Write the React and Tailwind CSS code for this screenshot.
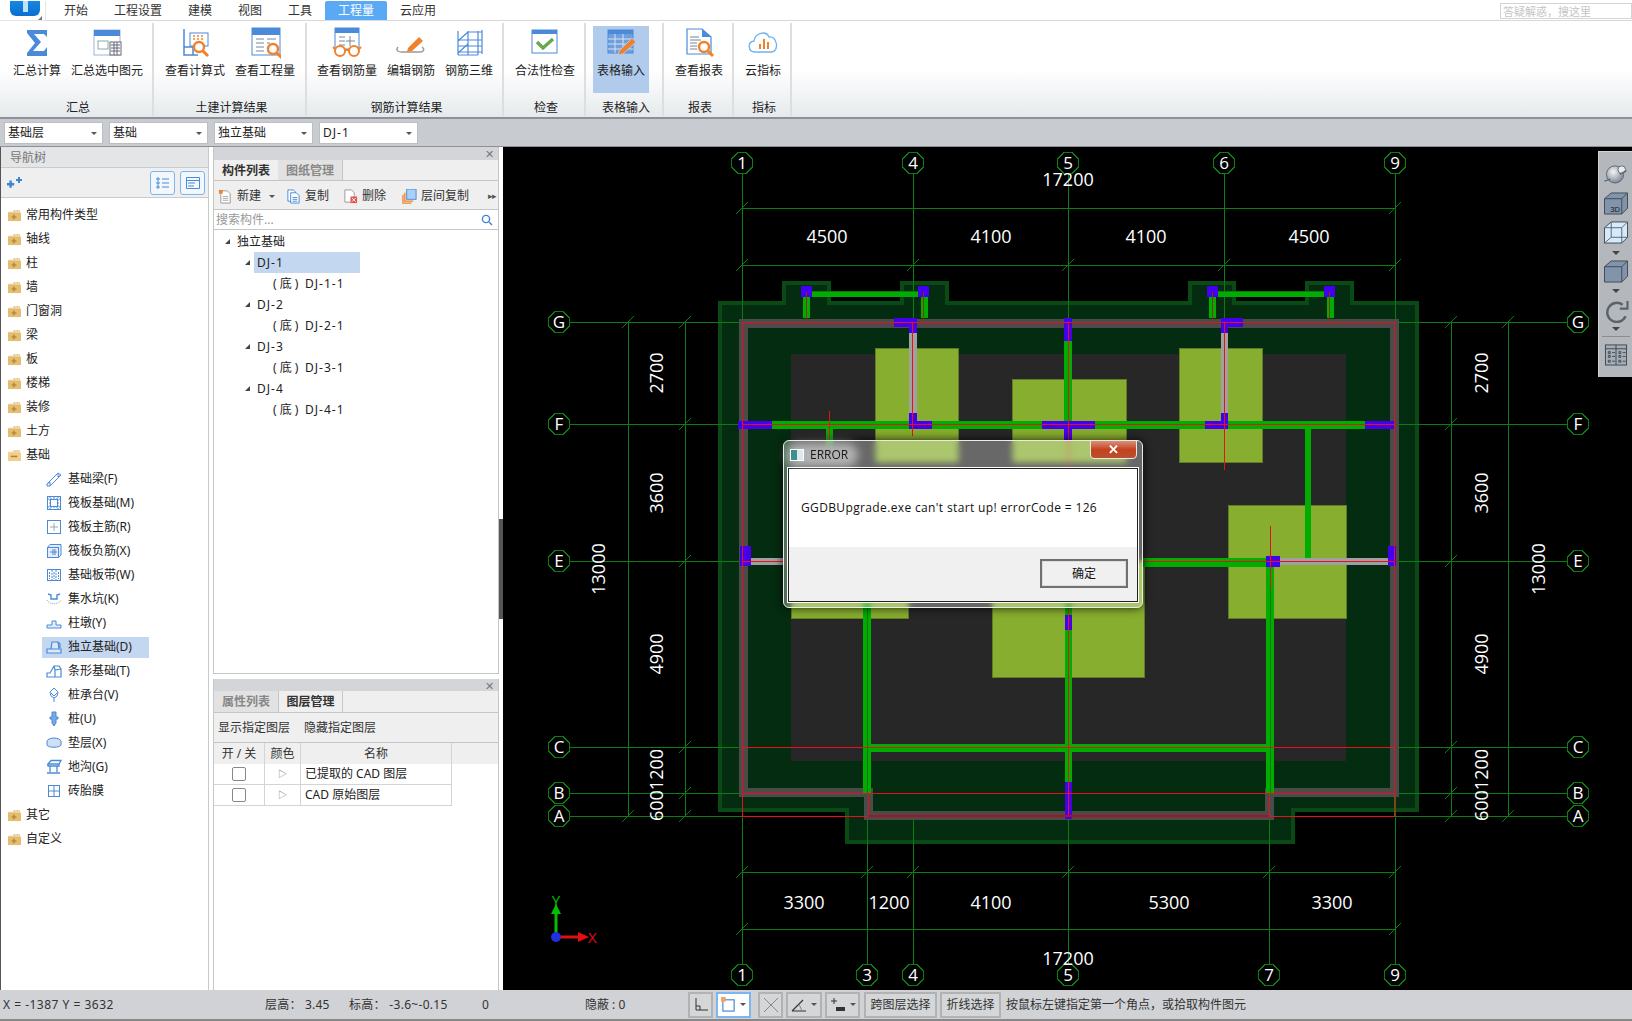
import React from "react";

const BLUE = "#4a8ad8";
const ORANGE = "#f0822d";

// ribbon icons, all on a 32x32 box
const Glass = ({ x = 20, y = 20, r = 5 }) => (
  <g fill="none" stroke={ORANGE}>
    <circle cx={x} cy={y} r={r} strokeWidth="2.4" fill="#fff" />
    <path d={`M${x + r - 1} ${y + r - 1}l5 5`} strokeWidth="3" />
  </g>
);

const ribbonIcons = {
  sum: <path d="M6 3H26V10L23 7H13L20 15L12 24H23L26 20V29H6V26L14 16L6 6Z" fill={BLUE} />,
  sumSel: (
    <g>
      <rect x="3" y="3" width="26" height="25" fill="#fff" stroke="#9db6d6" />
      <rect x="3" y="3" width="26" height="6" fill={BLUE} />
      <rect x="7" y="14" width="10" height="8" fill="none" stroke="#8aa" />
      <rect x="19" y="15" width="11" height="13" fill="#fff" stroke="#667" />
      <path d="M20 18h9M20 21h9M20 24h9M23 15v13M26 15v13" stroke="#667" strokeWidth="1" />
    </g>
  ),
  calc: (
    <g>
      <path d="M5 2V28H19M5 20H14V28" fill="none" stroke={BLUE} strokeWidth="1.5" />
      <rect x="11" y="6" width="18" height="13" fill="#fff" stroke={BLUE} />
      <path d="M14 9h2M18 9h2M22 9h2M14 12h2M18 12h2M22 12h2" stroke={ORANGE} strokeWidth="1.6" />
      <Glass x={20} y={20} r={5} />
    </g>
  ),
  qty: (
    <g>
      <rect x="3" y="1" width="28" height="27" fill="#fff" stroke={BLUE} />
      <rect x="3" y="1" width="28" height="7" fill={BLUE} />
      <path d="M7 12h8M7 16h8M7 20h8M7 24h8M18 12h9M18 16h3M18 24h2" stroke="#789" />
      <Glass x={24} y={22} r={5} />
    </g>
  ),
  rebarGlasses: (
    <g>
      <rect x="4" y="1" width="24" height="21" fill="#fff" stroke={BLUE} />
      <rect x="4" y="1" width="24" height="5" fill={BLUE} />
      <path d="M8 10h6M8 14h6M8 18h6M19 9v10M15 14h9" stroke="#789" />
      <g fill="#fff" stroke={ORANGE} strokeWidth="2">
        <circle cx="9" cy="24" r="5" />
        <circle cx="23" cy="24" r="5" />
      </g>
      <path d="M14 23h4M4 22L2 20M28 22L30 20" stroke={ORANGE} strokeWidth="2" />
    </g>
  ),
  rebarEdit: (
    <g>
      <path d="M3 20c-3 4 1 5 4 5H25c4 0 5-3 2-5" fill="none" stroke="#999" strokeWidth="1.4" />
      <path d="M13 21L24 10L28 14L17 24L12 25Z" fill={ORANGE} />
    </g>
  ),
  rebar3d: (
    <g fill="none" stroke={BLUE} strokeWidth="1.2">
      <path d="M5 4V28M15 4V28M25 4V28M29 3V27M5 14L15 5M5 26L15 17" />
      <path d="M5 13H29M5 19H29M5 25H29M15 5H29M5 28H25" />
    </g>
  ),
  check: (
    <g>
      <rect x="3" y="3" width="25" height="23" fill="#fff" stroke={BLUE} />
      <rect x="3" y="3" width="25" height="4" fill={BLUE} />
      <path d="M8 15L14 21L24 12" fill="none" stroke="#6aa84f" strokeWidth="3.4" />
    </g>
  ),
  table: (
    <g>
      <rect x="3" y="3" width="25" height="23" fill="#6f9fdc" stroke={BLUE} />
      <rect x="3" y="3" width="25" height="4" fill={BLUE} />
      <path d="M3 12H28M3 17H28M3 22H28M10 7V26M18 7V26" stroke="#d5e2f4" />
      <path d="M14 24L27 11L31 15L18 27L13 28Z" fill={ORANGE} stroke="#b0cbec" />
    </g>
  ),
  report: (
    <g>
      <path d="M4 2H19L28 10V27H4Z" fill="#fff" stroke={BLUE} strokeWidth="1.2" />
      <path d="M19 2L28 10H19Z" fill={BLUE} />
      <path d="M7 10h9M7 13h11M7 16h7M7 19h7M7 22h7" stroke="#789" />
      <Glass x={21} y={20} r={5} />
    </g>
  ),
  cloud: (
    <g>
      <path d="M8 25C1 25 0 15 7 14C8 6 19 3 22 10C30 8 33 25 24 25Z" fill="#fff" stroke="#6db3f0" strokeWidth="1.3" />
      <path d="M13 17v5M17 12v10M21 15v7" stroke={ORANGE} strokeWidth="2" />
    </g>
  ),
};

const ribbonGroups = [
  { label: "汇总", w: 154, pl: 7, items: [["汇总计算", "sum", 60], ["汇总选中图元", "sumSel", 80]] },
  { label: "土建计算结果", w: 153, pl: 6, items: [["查看计算式", "calc", 70], ["查看工程量", "qty", 70]] },
  { label: "钢筋计算结果", w: 197, pl: 5, items: [["查看钢筋量", "rebarGlasses", 70], ["编辑钢筋", "rebarEdit", 58], ["钢筋三维", "rebar3d", 58]] },
  { label: "检查", w: 82, pl: 6, items: [["合法性检查", "check", 70]] },
  { label: "表格输入", w: 78, pl: 7, items: [["表格输入", "table", 56, true]] },
  { label: "报表", w: 70, pl: 5, items: [["查看报表", "report", 60]] },
  { label: "指标", w: 58, pl: 4, items: [["云指标", "cloud", 50]] },
];

function TabBar() {
  const tabs = ["开始", "工程设置", "建模", "视图", "工具", "工程量", "云应用"];
  return (
    <div className="h-[21px] flex items-end border-b border-[#d8d8d8] bg-white relative shrink-0">
      <div className="w-[46px] h-[20px] relative border-r border-b border-[#e4e4e4] mb-[-1px] overflow-hidden">
        <div className="absolute left-[10px] top-[-12px] w-[30px] h-[27px] rounded-md bg-gradient-to-b from-[#1f9af0] to-[#0a6fd0]" />
        <div className="absolute left-[23px] top-0 w-[5px] h-[11px] bg-[#bfe2fa]" />
        <div className="absolute left-[38px] top-[15px] w-0 h-0 border-l-[4px] border-l-transparent border-b-[4px] border-b-[#777]" />
      </div>
      <div className="flex pl-[18px] h-[19px]">
        {tabs.map((t, i) => (
          <div
            key={t}
            className={
              i === 5
                ? "px-[13px] h-[19px] rounded-t-[2px] bg-[#5aa9f5] text-white text-[12px] leading-[20px]"
                : i === 4
                ? "pr-[13px] text-[#333] text-[12px] leading-[20px]"
                : i === 6
                ? "pl-[13px] text-[#333] text-[12px] leading-[20px]"
                : "pr-[26px] text-[#333] text-[12px] leading-[20px]"
            }
          >
            {t}
          </div>
        ))}
      </div>
      <div className="absolute right-0 top-[3px] w-[132px] h-[16px] border border-[#d4d4d4] text-[11px] leading-[15px] text-[#c4c4c4] pl-[2px]">
        答疑解惑，搜这里
      </div>
    </div>
  );
}

function Ribbon() {
  return (
    <div className="h-[98px] flex bg-gradient-to-b from-white from-50% to-[#e6eaec] border-b-2 border-[#8d9094] shrink-0">
      {ribbonGroups.map((g) => (
        <div key={g.label} style={{ width: g.w }} className="flex flex-col h-[93px] mt-[2px] border-r-2 border-[#dcdfe0] shrink-0">
          <div className="flex h-[70px] pt-[3px]" style={{ paddingLeft: g.pl }}>
            {g.items.map(([t, ic, w, active]) => (
              <div key={t} style={{ width: w }} className={"flex flex-col items-center h-[67px] shrink-0 " + (active ? "bg-[#b0cbec]" : "")}>
                <svg viewBox="0 0 32 32" className="w-[32px] h-[32px] mt-[1px]">{ribbonIcons[ic]}</svg>
                <div className="text-[12px] leading-[16px] text-[#222] mt-[4px] whitespace-nowrap">{t}</div>
              </div>
            ))}
          </div>
          <div className="text-center text-[12px] leading-[16px] text-[#222] mt-[7px] pl-[4px]">{g.label}</div>
        </div>
      ))}
    </div>
  );
}

function ComboStrip() {
  return (
    <div className="h-[28px] flex items-center gap-[6px] pl-[4px] pt-[1px] bg-[#c8cbd0] border-b border-[#8d9094] shrink-0">
      {["基础层", "基础", "独立基础", "DJ-1"].map((t) => (
        <div key={t} className="w-[99px] h-[22px] bg-white border border-[#bcbec2] flex items-center justify-between pl-[3px] pr-[5px] text-[12px] text-[#222]">
          <span className={t === "DJ-1" ? "tracking-[1px]" : ""}>{t}</span>
          <span className="w-0 h-0 border-x-[3px] border-x-transparent border-t-[3px] border-t-[#555]" />
        </div>
      ))}
    </div>
  );
}

// little tree icons, 16x16
const S = ({ children }) => (
  <svg viewBox="0 0 16 16" className="w-[16px] h-[16px] shrink-0" fill="none" stroke={BLUE} strokeWidth="1">
    {children}
  </svg>
);

const navIcons = {
  beam: <path d="M1 13L12 2L15 4L4 15H1ZM4 15V11L1 13M12 2V6L15 4" />,
  raft: <g><rect x="1.5" y="1.5" width="13" height="13" /><rect x="4.5" y="4.5" width="7" height="7" /><path d="M4 1v13M8 1v3M12 1v13M1 4h13M1 12h13" strokeDasharray="2 1" /></g>,
  raftMain: <g><rect x="1.5" y="1.5" width="13" height="13" /><path d="M8 4v8M4 8h8" stroke="#9ab" /></g>,
  raftNeg: <g><path d="M1.5 4.5L4 1.5H15V12L12.5 14.5H1.5Z" fill="#e3edf9" /><rect x="1.5" y="4.5" width="11" height="10" /><path d="M4 9h7M7 6v6M9 6v6" /></g>,
  strip: <g><rect x="1.5" y="2.5" width="13" height="11" /><path d="M1 2.5h14M6 3v10M10 3v10M3.5 5v7M8 5v7M12.5 5v7" strokeDasharray="2 1" /></g>,
  pit: <g><path d="M2 3L5 4V8H11V4L14 3" strokeWidth="1.4" /><path d="M1 9C3 14 13 14 15 9" strokeDasharray="1 1" stroke="#8aa" /></g>,
  pier: <g><path d="M1 13H15V10H10V6H6V10H1Z" fill="#e3edf9" /></g>,
  found: <g><path d="M1 14V10H5L6 3H12L13 10H15V14ZM1 10H13M12 3L14 5V9" fill="#dbe7f7" strokeWidth="1.2" /></g>,
  stripFound: <g><path d="M1 14V10H4L8 3H13L15 6V14ZM8 3L9 7L15 6M9 7V14" strokeWidth="1.2" /></g>,
  cap: <g><path d="M8 1L12 5L11 9L8 11L5 9L4 5ZM8 11V15M5 6L8 9L11 6" /></g>,
  pile: <g><path d="M6 1H10V6H12V8H10V12L8 15L6 12V8H4V6H6Z" fill="#7aa8e4" /></g>,
  cushion: <g><ellipse cx="8" cy="6.5" rx="7" ry="3.5" fill="#cfe0f5" /><path d="M1 7V10C2 13 14 13 15 10V7" fill="#cfe0f5" /></g>,
  ditch: <g><path d="M2 5L5 1.5H15L13 5ZM2 5H13V7H2ZM4 7V13M11 7V13M1 14H14" strokeWidth="1.3" /></g>,
  brick: <g><rect x="2.5" y="2.5" width="11" height="11" /><path d="M8 2v12M2 8h12" /></g>,
};

const navTop = ["常用构件类型", "轴线", "柱", "墙", "门窗洞", "梁", "板", "楼梯", "装修", "土方"];
const navChildren = [
  ["基础梁(F)", "beam"], ["筏板基础(M)", "raft"], ["筏板主筋(R)", "raftMain"], ["筏板负筋(X)", "raftNeg"],
  ["基础板带(W)", "strip"], ["集水坑(K)", "pit"], ["柱墩(Y)", "pier"], ["独立基础(D)", "found"],
  ["条形基础(T)", "stripFound"], ["桩承台(V)", "cap"], ["桩(U)", "pile"], ["垫层(X)", "cushion"],
  ["地沟(G)", "ditch"], ["砖胎膜", "brick"],
];

const Folder = ({ open }) => (
  <svg viewBox="0 0 16 14" className="w-[15px] h-[13px] shrink-0">
    <path d="M1 3H6L7 1H14V12H1Z" fill="#eed6a4" />
    <path d="M1 4H15V13H1Z" fill={open ? "#f0cf8c" : "#e6bd70"} />
    {open ? <path d="M4 8h7" stroke="#a8803a" strokeWidth="1.6" /> : <path d="M5 8.5h5M7.5 6v5" stroke="#b48a3c" strokeWidth="1.6" />}
  </svg>
);

function NavRow({ label, open }) {
  return (
    <div className="h-[24px] flex items-center pl-[6px] gap-[4px] text-[12px] text-[#222]">
      <Folder open={open} />
      <span>{label}</span>
    </div>
  );
}

function NavTree() {
  return (
    <div className="w-[209px] h-full flex flex-col border-l border-[#555] border-r-[#c8cacc] border-r shrink-0 bg-white">
      <div className="h-[21px] bg-[#e4e5e7] border-b border-[#c8cacc] text-[12px] leading-[22px] text-[#777] pl-[9px]">导航树</div>
      <div className="h-[30px] bg-[#efefef] border-b border-[#c8cacc] flex items-center pr-[3px]">
        <svg viewBox="0 0 16 16" className="w-[16px] h-[16px] ml-[6px] mr-auto" fill="#3f83d4">
          <path d="M0 9h3V6h3v3h3v3H6v3H3v-3H0z" transform="scale(.8) translate(0 1)" />
          <path d="M9 4h2V2h2v2h2v2h-2v2h-2V6H9z" />
        </svg>
        {[0, 1].map((i) => (
          <div key={i} className="w-[25px] h-[24px] ml-[5px] rounded-[3px] border border-[#7db6ee] bg-[#f2f7fc] flex items-center justify-center">
            <svg viewBox="0 0 16 16" className="w-[16px] h-[16px]" fill="none" stroke={BLUE}>
              {i === 0 ? <path d="M2 3h2v2H2zM7 4h7M2 7h2v2H2zM7 8h7M2 11h2v2H2zM7 12h7" /> : <path d="M1.5 2.5h13v11h-13zM1.5 5.5h13M3 8h7M3 11h6" />}
            </svg>
          </div>
        ))}
      </div>
      <div className="pt-[5px]">
        {navTop.map((t) => <NavRow key={t} label={t} />)}
        <NavRow label="基础" open />
        {navChildren.map(([t, ic]) => (
          <div key={t} className="h-[24px] flex items-center">
            <div className={"ml-[41px] pl-[4px] w-[107px] h-[21px] flex items-center gap-[6px] text-[12px] text-[#222] whitespace-nowrap " + (ic === "found" ? "bg-[#c4d7f0]" : "")}>
              <S>{navIcons[ic]}</S>
              <span>{t}</span>
            </div>
          </div>
        ))}
        <NavRow label="其它" />
        <NavRow label="自定义" />
      </div>
    </div>
  );
}

const tools = [
  ["新建", <g key="a"><path d="M3 2H10L13 5V15H3Z" fill="#fff" stroke="#999" /><path d="M5 8h6M5 10h6M5 12h6" stroke="#aaa" /><rect x="1" y="1" width="4" height="4" fill={ORANGE} /></g>],
  ["复制", <g key="b"><path d="M2 1H8L10 3V13H2Z" fill="#fff" stroke={BLUE} /><path d="M5 4H11L14 7V15H5Z" fill="#fff" stroke={BLUE} /><path d="M7 9h5M7 11h5M7 13h5" stroke={BLUE} /></g>],
  ["删除", <g key="c"><path d="M2 1H9L12 4V14H2Z" fill="#fff" stroke="#999" /><rect x="8" y="8" width="7" height="7" fill="#e0524f" /><path d="M9.5 9.5l4 4m0-4l-4 4" stroke="#fff" /></g>],
  ["层间复制", <g key="d"><rect x="5" y="0" width="10" height="11" fill="#a9d0f7" stroke={BLUE} /><path d="M3 4V13H12M1 6V15H10" fill="none" stroke={ORANGE} strokeWidth="1.4" /></g>],
];

function ComponentPanel() {
  const rows = [["DJ-1", "DJ-1-1"], ["DJ-2", "DJ-2-1"], ["DJ-3", "DJ-3-1"], ["DJ-4", "DJ-4-1"]];
  return (
    <div className="h-[527px] border-x border-b border-[#c4c6c8] bg-white flex flex-col">
      <div className="h-[13px] bg-[#d3d5d8] flex justify-end items-center pr-[4px] text-[#777] text-[11px] leading-none">✕</div>
      <div className="h-[21px] flex bg-[#efefef] border-b border-[#c4c6c8] text-[12px] font-bold leading-[21px]">
        <div className="w-[64px] text-center text-[#333]">构件列表</div>
        <div className="w-[65px] text-center text-[#888] bg-[#e2e2e2] border-r border-[#c4c6c8]">图纸管理</div>
      </div>
      <div className="h-[29px] flex items-center bg-[#efefef] border-b border-[#c4c6c8] text-[12px] text-[#333] pl-[4px] pt-[2px]">
        {tools.map(([t, g], i) => (
          <div key={t} className={"flex items-center gap-[4px] " + ["mr-[5px]", "mr-[14px]", "mr-[16px]", ""][i]}>
            <svg viewBox="0 0 16 16" className="w-[15px] h-[15px]">{g}</svg>
            <span>{t}</span>
            {i === 0 && <span className="ml-[4px] mr-[6px] w-0 h-0 border-x-[3px] border-x-transparent border-t-[3px] border-t-[#555]" />}
          </div>
        ))}
        <span className="text-[9px] text-[#555] tracking-[-1px] ml-auto mr-[2px]">▸▸</span>
      </div>
      <div className="h-[20px] flex items-center justify-between border-b border-[#c4c6c8] text-[12px] text-[#999] pl-[2px] pr-[5px] pt-[1px]">
        <span>搜索构件...</span>
        <svg viewBox="0 0 12 12" className="w-[12px] h-[12px]" fill="none" stroke="#3f83d4" strokeWidth="1.4">
          <circle cx="5" cy="5" r="3.6" />
          <path d="M8 8l3 3" />
        </svg>
      </div>
      <div className="pt-[1px] text-[12px] text-[#222]">
        <div className="h-[21px] flex items-center pl-[11px] gap-[7px]">
          <span className="w-0 h-0 border-l-[5px] border-l-transparent border-b-[5px] border-b-[#444]" />
          <span>独立基础</span>
        </div>
        {rows.map(([a, b], i) => (
          <React.Fragment key={a}>
            <div className="h-[21px] flex items-center pl-[31px] relative">
              <span className="w-0 h-0 border-l-[5px] border-l-transparent border-b-[5px] border-b-[#444] mr-[4px]" />
              <span className={"h-[21px] leading-[21px] pl-[3px] w-[106px] tracking-[1px] " + (i === 0 ? "bg-[#c4d7f0]" : "")}>{a}</span>
            </div>
            <div className="h-[21px] flex items-center pl-[59px]">
              <span className="w-[32px] whitespace-nowrap">( 底 )</span>
              <span className="tracking-[1px]">{b}</span>
            </div>
          </React.Fragment>
        ))}
      </div>
    </div>
  );
}

function LayerPanel() {
  return (
    <div className="flex-1 mt-[5px] border-x border-[#c4c6c8] bg-white flex flex-col">
      <div className="h-[12px] bg-[#d3d5d8] flex justify-end items-center pr-[4px] text-[#777] text-[11px] leading-none">✕</div>
      <div className="h-[22px] flex bg-[#efefef] border-b border-[#c4c6c8] text-[12px] font-bold leading-[21px]">
        <div className="w-[64px] text-center text-[#888] bg-[#e2e2e2]">属性列表</div>
        <div className="w-[65px] text-center text-[#333] border-x border-[#c4c6c8]">图层管理</div>
      </div>
      <div className="h-[30px] flex items-center gap-[14px] pl-[4px] bg-[#efefef] border-b border-[#c4c6c8] text-[12px] text-[#333]">
        <span>显示指定图层</span>
        <span>隐藏指定图层</span>
      </div>
      <div className="bg-[#efefef] h-[21px]">
        <div className="grid grid-cols-[51px_36px_151px] w-[238px] h-[21px] text-[12px] text-[#333] text-center leading-[21px]">
          <div className="border-r border-[#d4d4d4]">开 / 关</div>
          <div className="border-r border-[#d4d4d4]">颜色</div>
          <div className="border-r border-[#d4d4d4]">名称</div>
        </div>
      </div>
      {["已提取的 CAD 图层", "CAD 原始图层"].map((t) => (
        <div key={t} className="grid grid-cols-[51px_36px_151px] w-[238px] h-[21px] text-[12px] text-[#222] border-y border-t-0 border-[#d4d4d4]">
          <div className="border-r border-[#d4d4d4] flex items-center justify-center">
            <span className="w-[14px] h-[14px] rounded-[2px] border border-[#888]" />
          </div>
          <div className="border-r border-[#d4d4d4] flex items-center justify-center">
            <span className="text-[9px] text-[#777]">▷</span>
          </div>
          <div className="border-r border-[#d4d4d4] pl-[4px] leading-[20px]">{t}</div>
        </div>
      ))}
    </div>
  );
}

// --- the CAD drawing, in page coordinates ---
const AXIS = "#0b7d12";
const WALL = "#00ad00";
const COL = "#4400ee";
const RED = "#e5121c";
const GREY = "#a0a0a0";

const R = ({ x1, y1, x2, y2, f }) => <rect x={x1} y={y1} width={x2 - x1} height={y2 - y1} fill={f} />;

const Bubble = ({ x, y, t }) => {
  const r = 11;
  const pts = Array.from({ length: 8 }, (_, i) => {
    const a = (Math.PI / 4) * i + Math.PI / 8;
    return `${x + r * Math.cos(a)},${y + r * Math.sin(a)}`;
  }).join(" ");
  return (
    <g>
      <polygon points={pts} fill="#000" stroke={AXIS} strokeWidth="1.3" />
      <text x={x} y={y + 6} textAnchor="middle" fontSize="17" fill="#fff" fontFamily="Open Sans, sans-serif">{t}</text>
    </g>
  );
};

const Dim = ({ x, y, t, rot }) => (
  <text
    x={x}
    y={y}
    textAnchor="middle"
    dominantBaseline="central"
    fontSize="18"
    fill="#fff"
    fontFamily="Open Sans, sans-serif"
    transform={rot ? `rotate(-90 ${x} ${y})` : undefined}
  >
    {t}
  </text>
);

const outerPts = "720,303 784,303 784,283 829,283 829,303 902,303 902,283 947,283 947,303 1190,303 1190,283 1234,283 1234,303 1307,303 1307,283 1352,283 1352,303 1417,303 1417,810 1293,810 1293,842 847,842 847,810 720,810";
const innerPts = "743,323 1394,323 1394,792 1269,792 1269,815 868,815 868,792 743,792";

function Ticks({ xs, y }) {
  return xs.map((x) => <path key={x + "-" + y} d={`M${x - 6} ${y + 6}L${x + 6} ${y - 6}`} stroke={AXIS} />);
}
function TicksV({ ys, x }) {
  return ys.map((y) => <path key={x + "-" + y} d={`M${x - 6} ${y + 6}L${x + 6} ${y - 6}`} stroke={AXIS} />);
}

function Drawing() {
  const hys = [322, 424, 561, 747, 793, 816];
  return (
    <svg viewBox="503 147 1129 843" className="w-full h-full block" shapeRendering="crispEdges">
      <rect x="503" y="147" width="1129" height="843" fill="#000" />
      <polygon points={outerPts} fill="#042c10" stroke="#0a4a14" strokeWidth="4" />

      {/* axes sit under the floor fill */}
      <g stroke={AXIS} strokeWidth="1">
        {[742, 913, 1068, 1395].map((x) => <line key={x} x1={x} y1={174} x2={x} y2={964} />)}
        <line x1={1224} y1={174} x2={1224} y2={816} />
        <line x1={867} y1={793} x2={867} y2={964} />
        <line x1={1269} y1={793} x2={1269} y2={964} />
        {hys.map((y) => <line key={y} x1={570} y1={y} x2={1567} y2={y} />)}
        <line x1={742} y1={208} x2={1395} y2={208} />
        <line x1={742} y1={265} x2={1395} y2={265} />
        <line x1={742} y1={872} x2={1395} y2={872} />
        <line x1={742} y1={929} x2={1395} y2={929} />
        {[628, 685, 1451, 1508].map((x) => <line key={x} x1={x} y1={322} x2={x} y2={816} />)}
      </g>
      <Ticks xs={[742, 1395]} y={208} />
      <Ticks xs={[742, 913, 1068, 1224, 1395]} y={265} />
      <Ticks xs={[742, 867, 913, 1068, 1269, 1395]} y={872} />
      <Ticks xs={[742, 1395]} y={929} />
      {[628, 1508].map((x) => <TicksV key={x} ys={[322, 816]} x={x} />)}
      {[685, 1451].map((x) => <TicksV key={x} ys={hys} x={x} />)}

      <polygon points={innerPts} fill="#042c10" />
      <R x1={791} y1={354} x2={1346} y2={761} f="#272727" />
      {[
        [875, 348, 958, 462], [1012, 379, 1126, 462], [1179, 348, 1262, 462],
        [1228, 505, 1346, 618], [791, 520, 908, 618], [992, 560, 1144, 677],
      ].map(([a, b, c, d]) => (
        <rect key={a} x={a} y={b} width={c - a} height={d - b} fill="#87ae2e" stroke="#5f7d26" />
      ))}
      <polygon points={innerPts} fill="none" stroke="#4b4b4b" strokeWidth="9" />

      {/* walls */}
      {[0, 406].map((d) => (
        <g key={d}>
          <R x1={812 + d} y1={291} x2={918 + d} y2={297} f={WALL} />
          <path d={`M${812 + d} 291H${918 + d}`} stroke="#0a7a10" />
          <R x1={803 + d} y1={297} x2={810 + d} y2={318} f={WALL} />
          <R x1={921 + d} y1={297} x2={928 + d} y2={318} f={WALL} />
          <R x1={801 + d} y1={286} x2={812 + d} y2={297} f={COL} />
          <R x1={918 + d} y1={286} x2={929 + d} y2={297} f={COL} />
          <path d={`M${806 + d} 322V292M${923 + d} 322V292`} fill="none" stroke="#8a3010" />
        </g>
      ))}
      <R x1={742} y1={421} x2={1395} y2={429} f={WALL} />
      <R x1={909} y1={333} x2={917} y2={413} f={GREY} />
      <R x1={1221} y1={333} x2={1228} y2={413} f={GREY} />
      <R x1={1064} y1={341} x2={1072} y2={421} f={WALL} />
      <R x1={826} y1={429} x2={833} y2={445} f={WALL} />
      <R x1={1305} y1={429} x2={1311} y2={558} f={WALL} />
      <R x1={751} y1={558} x2={783} y2={565} f={GREY} />
      <R x1={1143} y1={558} x2={1266} y2={567} f={WALL} />
      <R x1={1280} y1={558} x2={1388} y2={565} f={GREY} />
      <R x1={863} y1={600} x2={871} y2={793} f={WALL} />
      <R x1={1065} y1={600} x2={1072} y2={793} f={WALL} />
      <R x1={1266} y1={567} x2={1274} y2={793} f={WALL} />
      <R x1={863} y1={744} x2={1274} y2={752} f={WALL} />
      <path d="M867 600V793M1270 567V793" stroke="#0a7a10" />

      {/* columns */}
      {[
        [894, 318, 917, 327], [909, 327, 917, 333], [1064, 318, 1072, 341], [1221, 318, 1243, 327], [1221, 327, 1228, 333],
        [738, 421, 772, 429], [909, 413, 917, 429], [909, 421, 932, 429], [1042, 421, 1095, 429], [1064, 429, 1072, 440],
        [1205, 421, 1228, 429], [1221, 413, 1228, 429], [1365, 421, 1395, 429],
        [740, 546, 751, 566], [1388, 546, 1396, 566], [1266, 556, 1280, 567], [1065, 615, 1072, 630], [1065, 782, 1072, 819],
      ].map(([a, b, c, d]) => <R key={a + "-" + b} x1={a} y1={b} x2={c} y2={d} f={COL} />)}

      {/* red centre lines */}
      <g stroke={RED} fill="none" strokeWidth="1">
        <path d="M742 322H1394V816H742ZM742 424H1395M742 561H1395M742 747H1394M742 793H1394M868 793V816M1269 793V816" />
        <path d="M1068 322V816" />
        <path d="M912 322V436M1224 322V470M829 411V445M1270 526V589" />
      </g>
      <path d="M868 816H1269" stroke="#a8141c" strokeWidth="2" />

      {/* bubbles */}
      {[[742, "1"], [913, "4"], [1068, "5"], [1224, "6"], [1395, "9"]].map(([x, t]) => <Bubble key={t} x={x} y={163} t={t} />)}
      {[[742, "1"], [867, "3"], [913, "4"], [1068, "5"], [1269, "7"], [1395, "9"]].map(([x, t]) => <Bubble key={t} x={x} y={975} t={t} />)}
      {[[322, "G"], [424, "F"], [561, "E"], [747, "C"], [793, "B"], [816, "A"]].map(([y, t]) => (
        <g key={t}>
          <Bubble x={559} y={y} t={t} />
          <Bubble x={1578} y={y} t={t} />
        </g>
      ))}

      {/* dimensions */}
      <Dim x={1068} y={179} t="17200" />
      <Dim x={1068} y={958} t="17200" />
      {[[827, "4500"], [991, "4100"], [1146, "4100"], [1309, "4500"]].map(([x, t]) => <Dim key={x} x={x} y={236} t={t} />)}
      {[[804, "3300"], [889, "1200"], [991, "4100"], [1169, "5300"], [1332, "3300"]].map(([x, t]) => <Dim key={x} x={x} y={902} t={t} />)}
      {[656, 1481].map((x) => (
        <g key={x}>
          <Dim rot x={x} y={373} t="2700" />
          <Dim rot x={x} y={493} t="3600" />
          <Dim rot x={x} y={654} t="4900" />
          <Dim rot x={x} y={785} t="6001200" />
        </g>
      ))}
      <Dim rot x={598} y={569} t="13000" />
      <Dim rot x={1538} y={569} t="13000" />

      {/* ucs marker */}
      <g shapeRendering="auto">
        <path d="M556 937V912" stroke="#00c000" strokeWidth="3" />
        <path d="M551 914L556 904L561 914Z" fill="#00c000" />
        <path d="M556 937H580" stroke="#e01010" strokeWidth="3" />
        <path d="M578 932L589 937L578 942Z" fill="#e01010" />
        <circle cx="556" cy="937" r="5" fill="#2030e0" />
        <text x="556" y="907" textAnchor="middle" fontSize="15" fill="#00c000" fontFamily="Open Sans, sans-serif" dy="-1">Y</text>
        <text x="588" y="943" fontSize="15" fill="#e01010" fontFamily="Open Sans, sans-serif">X</text>
      </g>
    </svg>
  );
}

const cubeFace = "M1 7L8 1H25V17L19 23H1Z";

function ViewToolbar() {
  return (
    <div className="absolute right-0 top-[4px] w-[34px] h-[226px] bg-[#b4b8bc] border-l border-t border-[#d0d2d4] flex flex-col items-center pt-[11px]">
      <svg viewBox="0 0 26 22" className="w-[26px] h-[21px]">
        <defs>
          <radialGradient id="ballShade" cx="0.4" cy="0.35" r="0.7">
            <stop offset="0" stopColor="#f4f6f8" />
            <stop offset="1" stopColor="#76818e" />
          </radialGradient>
        </defs>
        <circle cx="12" cy="12" r="9" fill="url(#ballShade)" stroke="#5d6670" />
        <circle cx="19" cy="7" r="4" fill="#e8ecf0" stroke="#5d6670" />
        <path d="M1 19L7 17M17 12L24 8" stroke="#5d6670" strokeWidth="1.4" />
      </svg>
      <svg viewBox="0 0 26 24" className="w-[26px] h-[23px] mt-[8px]">
        <path d={cubeFace} fill="#8294ab" stroke="#3f4a56" />
        <path d="M1 7H19V23M19 7L25 1" fill="none" stroke="#3f4a56" />
        <text x="7" y="21" fontSize="8" fill="#1a1a1a" fontFamily="Liberation Sans, sans-serif">3D</text>
      </svg>
      <svg viewBox="0 0 26 24" className="w-[26px] h-[23px] mt-[6px]">
        <path d={cubeFace} fill="#d6eafc" stroke="#3f4a56" />
        <path d="M1 7H19V23M19 7L25 1M8 1V17H25M8 17L1 23" fill="none" stroke="#5a6672" />
      </svg>
      <span className="mt-[7px] w-0 h-0 border-x-[4px] border-x-transparent border-t-[4px] border-t-[#444]" />
      <svg viewBox="0 0 26 24" className="w-[26px] h-[23px] mt-[5px]">
        <path d={cubeFace} fill="#8294ab" stroke="#3f4a56" />
        <path d="M1 7H19V23M19 7L25 1" fill="none" stroke="#3f4a56" />
      </svg>
      <span className="mt-[6px] w-0 h-0 border-x-[4px] border-x-transparent border-t-[4px] border-t-[#444]" />
      <svg viewBox="0 0 26 24" className="w-[26px] h-[23px] mt-[7px]" fill="none" stroke="#5a626c" strokeWidth="2.6">
        <path d="M20 5A10 10 0 1 0 23 17" />
        <path d="M25 1V9H17" strokeWidth="2.2" />
      </svg>
      <span className="mt-[4px] w-0 h-0 border-x-[4px] border-x-transparent border-t-[4px] border-t-[#444]" />
      <div className="w-[28px] h-px bg-[#8a8e92] mt-[5px] mb-[6px]" />
      <svg viewBox="0 0 26 24" className="w-[26px] h-[23px]" fill="none" stroke="#3f4a56">
        <rect x="2" y="2" width="22" height="21" fill="#a6adb4" />
        <path d="M13 2v21M2 6h22M5 9h2v2H5zM9 10h3M5 13h2v2H5zM9 14h3M5 18h2v2H5zM9 19h3M16 9h2v2h-2zM20 10h3M16 13h2v2h-2zM20 14h3M16 18h2v2h-2zM20 19h3" />
      </svg>
    </div>
  );
}

function ErrorDialog() {
  return (
    <div className="absolute left-[280px] top-[293px] w-[360px] h-[168px] rounded-[6px] border border-[#e8ebe8] bg-white/30 backdrop-blur-[3px] shadow-[0_0_10px_rgba(0,0,0,0.8)] flex flex-col">
      <div className="absolute left-[2px] top-[2px] w-[72px] h-[24px] rounded-full bg-white/50 blur-[5px]" />
      <div className="h-[27px] flex items-center pl-[6px] gap-[6px] relative shrink-0">
        <div className="w-[14px] h-[12px] border border-white bg-gradient-to-r from-[#3f8f8f] from-50% to-[#dfe8ef] to-50%" />
        <span className="text-[12px] font-['Open_Sans',sans-serif] text-[#1a1a1a]">ERROR</span>
      </div>
      <div className="absolute right-[5px] top-[-1px] w-[47px] h-[19px] rounded-b-[4px] border border-[#e8e8e8] bg-gradient-to-b from-[#d98f78] via-[#c4421c] to-[#b9502f] flex items-center justify-center text-white text-[13px] font-bold leading-none">
        ✕
      </div>
      <div className="mx-[4px] mb-[5px] flex-1 border border-[#222] outline outline-white flex flex-col">
        <div className="h-[78px] bg-white flex items-center pl-[12px] text-[12px] tracking-[0.36px] font-['Open_Sans',sans-serif] text-[#111]">
          GGDBUpgrade.exe can't start up! errorCode = 126
        </div>
        <div className="flex-1 bg-[#f0f0f0] flex justify-end items-start pt-[12px] pr-[9px]">
          <div className="w-[88px] h-[29px] border-2 border-[#707070] bg-[#f0f0f0] outline outline-[#ddd] outline-offset-[-3px] text-center text-[12px] leading-[25px] text-[#111]">
            确定
          </div>
        </div>
      </div>
    </div>
  );
}

const Arrow = () => <span className="w-0 h-0 border-x-[3px] border-x-transparent border-t-[3px] border-t-[#555]" />;

const Btn = ({ w, ml = 3, children, white }) => (
  <div style={{ width: w, marginLeft: ml }} className={"h-[26px] border-2 flex items-center justify-center text-[12px] text-[#333] gap-[4px] shrink-0 " + (white ? "bg-white border-[#7db6ee]" : "bg-[#d4d6d8] border-[#b0b2b4]")}>
    {children}
  </div>
);

function StatusBar() {
  return (
    <div className="h-[31px] bg-[#d0d2d5] border-b-2 border-b-[#888] flex items-center text-[12px] text-[#333] shrink-0 mb-[1px]">
      <div className="w-[265px] pl-[3px] tracking-[0.5px] pt-[1px]">X = -1387 Y = 3632</div>
      <div className="w-[84px] pt-[1px] tracking-[0.2px]">层高： 3.45</div>
      <div className="w-[133px] pt-[1px] tracking-[0.3px]">标高： -3.6~-0.15</div>
      <div className="w-[103px] pt-[1px]">0</div>
      <div className="w-[103px] pt-[1px]">隐蔽 : 0</div>
      <Btn w={25} ml={0}>
        <svg viewBox="0 0 16 16" className="w-[16px] h-[16px]" fill="none" stroke="#333"><path d="M3 1V13H15M3 9H7V13" /></svg>
      </Btn>
      <Btn w={35} white>
        <svg viewBox="0 0 16 16" className="w-[15px] h-[15px]" fill="none"><rect x="2" y="3" width="12" height="12" stroke="#3f83d4" strokeWidth="1.2" /><rect x="0" y="0" width="5" height="5" fill="#f4a25e" /></svg>
        <Arrow />
      </Btn>
      <Btn w={25} ml={7}>
        <svg viewBox="0 0 16 16" className="w-[16px] h-[16px]" stroke="#888"><path d="M1 1L15 15M15 1L1 15" /></svg>
      </Btn>
      <Btn w={36}>
        <svg viewBox="0 0 16 16" className="w-[16px] h-[16px]" fill="none" stroke="#333"><path d="M1 14H15M1 14L12 3" strokeWidth="1.2" /><path d="M8 7L11 14" stroke="#888" /></svg>
        <Arrow />
      </Btn>
      <Btn w={35}>
        <svg viewBox="0 0 16 16" className="w-[16px] h-[16px]"><path d="M4 1V7M1 4H7" stroke="#333" /><rect x="6" y="10" width="9" height="4" fill="#333" /></svg>
        <Arrow />
      </Btn>
      <Btn w={73} ml={4}>跨图层选择</Btn>
      <Btn w={61}>折线选择</Btn>
      <div className="ml-[5px] whitespace-nowrap pt-[1px]">按鼠标左键指定第一个角点，或拾取构件图元</div>
    </div>
  );
}

export default function App() {
  return (
    <div className="w-[1632px] h-[1021px] overflow-hidden flex flex-col bg-white font-['Noto_Sans','Noto_Sans_CJK_SC',sans-serif]">
      <TabBar />
      <Ribbon />
      <ComboStrip />
      <div className="h-[843px] flex shrink-0">
        <NavTree />
        <div className="w-[4px] shrink-0" />
        <div className="w-[286px] shrink-0 flex flex-col">
          <ComponentPanel />
          <LayerPanel />
        </div>
        <div className="w-[4px] shrink-0 flex items-center">
          <div className="w-full h-[100px] bg-[#555]" />
        </div>
        <div className="flex-1 relative bg-black overflow-hidden">
          <Drawing />
          <ViewToolbar />
          <ErrorDialog />
        </div>
      </div>
      <StatusBar />
    </div>
  );
}
